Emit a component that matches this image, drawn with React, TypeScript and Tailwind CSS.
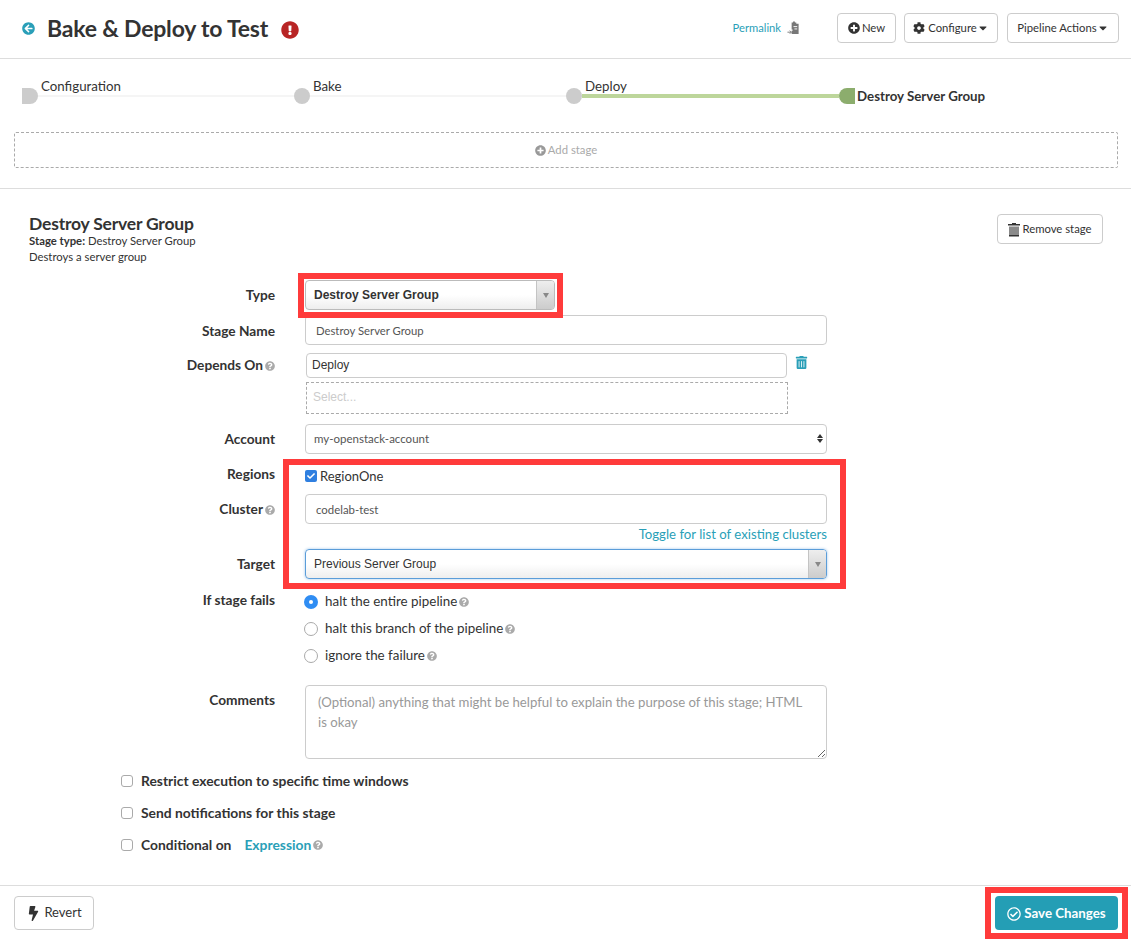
import { FaArrowCircleLeft, FaBolt, FaCaretDown, FaCheck, FaCog, FaExclamationCircle, FaPlusCircle, FaQuestionCircle, FaRegCheckCircle, FaTrashAlt } from 'react-icons/fa'
import type { ReactNode } from 'react'

const font = 'font-["Lato","Open_Sans",sans-serif]'

function Help() {
  return <FaQuestionCircle className="inline-block ml-[2px] text-[#aaaaaa] text-[10px] align-[-1px]" />
}

function Row({ label, help, children, className = '', labelClass = '' }: { label: string; help?: boolean; children: ReactNode; className?: string; labelClass?: string }) {
  return (
    <div className={`flex items-start ${className}`}>
      <div className={`w-[275px] shrink-0 text-right text-[13.7px] font-bold text-[#333333] leading-[18px] ${labelClass}`}>
        {label}
        {help && <Help />}
      </div>
      <div className="w-[522px] ml-[30px]">{children}</div>
    </div>
  )
}

// chosen-style select with the gradient and grey arrow box
function ChosenSelect({ value, bold, focus, className }: { value: string; bold?: boolean; focus?: boolean; className: string }) {
  return (
    <div className={`flex items-stretch h-[30px] rounded-[4px] border overflow-hidden font-["Liberation_Sans",sans-serif] bg-gradient-to-b from-white via-white to-[#eeeeee] ${focus ? 'border-[#5b9dd9] shadow-[0_0_3px_#9ec5ea]' : 'border-[#bbbbbb]'} ${className}`}>
      <span className={`flex-1 pl-2 flex items-center text-[12px] text-[#333333] ${bold ? 'font-bold' : ''}`}>{value}</span>
      <span className="w-[18px] border-l border-[#c4c4c4] bg-gradient-to-b from-[#eeeeee] to-[#cccccc] flex items-center justify-center">
        <span className="w-0 h-0 border-x-[3px] border-x-transparent border-t-[5px] border-t-[#888888]" />
      </span>
    </div>
  )
}

function Radio({ on, children }: { on?: boolean; children: ReactNode }) {
  return (
    <div className="flex items-center h-[27px] -ml-[1px] text-[13.4px] text-[#333333]">
      {on ? (
        <span className="w-[14px] h-[14px] rounded-full bg-[#2f8df3] flex items-center justify-center">
          <span className="w-[4px] h-[4px] rounded-full bg-white" />
        </span>
      ) : (
        <span className="w-[14px] h-[14px] rounded-full border border-[#aaaaaa] bg-white" />
      )}
      <span className="ml-[7px]">{children}</span>
      <Help />
    </div>
  )
}

function Check({ children }: { children: ReactNode }) {
  return (
    <div className="flex items-center h-[32px] pl-[121px] text-[13.85px] font-bold text-[#333333]">
      <span className="w-[12px] h-[12px] rounded-[3px] border border-[#aaaaaa] bg-white mr-2" />
      {children}
    </div>
  )
}

function Node({ shape, label }: { shape: string; label: string }) {
  return (
    <div className="relative flex items-center w-[272px] shrink-0">
      <span className={`w-[16px] h-[16px] bg-[#cccccc] shrink-0 ${shape}`} />
      <span className="flex-1 bg-[#f5f5f5] h-[2px]" />
      <span className="absolute left-[19px] top-[-11px] text-[13.3px] text-[#333333] leading-[18px]">{label}</span>
    </div>
  )
}

export default function App() {
  return (
    <div className={`relative w-[1131px] h-[944px] bg-white overflow-hidden ${font}`}>
      {/* Header */}
      <header className="h-[59px] border-b border-[#dddddd] flex items-center pl-[22px] pr-[12px] pb-[2px]">
        <FaArrowCircleLeft className="text-[#2a9fb8] text-[13px]" />
        <h1 className="ml-[12px] mt-[1px] text-[23px] font-bold text-[#333333] tracking-[-0.2px]">Bake &amp; Deploy to Test</h1>
        <FaExclamationCircle className="ml-[13px] mt-[3px] text-[#b82525] text-[18px]" />
        <a className="ml-auto text-[11.2px] text-[#2a9fb8]">Permalink</a>
        <svg viewBox="0 0 14 15" className="ml-[6px] w-[13px] h-[14px]">
          <path d="M5 3V1.500h1.500V0.500h2v1H10V3h2.500v11H5v-3.500h1V9H5V3z" fill="#777777" />
          <path d="M7 6h4M8 8.500h3" stroke="#ffffff" strokeWidth="1" />
          <path d="M0.500 12h4M3 10.300L4.700 12 3 13.700" stroke="#777777" strokeWidth="1" fill="none" />
        </svg>
        <button className="ml-[37px] h-[30px] w-[59px] border border-[#cccccc] rounded-[4px] text-[11.3px] text-[#333333] flex items-center justify-center">
          <FaPlusCircle className="text-[12px] mr-[2px]" />New
        </button>
        <button className="ml-[8px] h-[30px] w-[94px] border border-[#cccccc] rounded-[4px] text-[11.3px] text-[#333333] flex items-center justify-center">
          <FaCog className="text-[12px] mr-[3px]" />Configure<FaCaretDown className="text-[12px]" />
        </button>
        <button className="ml-[9px] h-[30px] w-[112px] border border-[#cccccc] rounded-[4px] text-[11.3px] text-[#333333] flex items-center justify-center">
          Pipeline Actions<FaCaretDown className="text-[12px]" />
        </button>
      </header>

      {/* Pipeline graph */}
      <section className="h-[130px] border-b border-[#dddddd] pl-[14px] pr-[13px] pt-[29px]">
        <div className="flex items-center h-[16px] pl-[8px]">
          <Node shape="rounded-r-full" label="Configuration" />
          <Node shape="rounded-full" label="Bake" />
          <div className="relative flex items-center w-[273px] shrink-0">
            <span className="w-[16px] h-[16px] rounded-full bg-[#cccccc] shrink-0" />
            <span className="flex-1 bg-[#bdd69b] h-[4px]" />
            <span className="absolute left-[19px] top-[-11px] text-[13.3px] text-[#333333] leading-[18px]">Deploy</span>
          </div>
          <span className="w-[16px] h-[16px] bg-[#8cad6d] rounded-l-full shrink-0" />
          <span className="ml-[2px] mt-[1px] text-[13.3px] font-bold text-[#333333]">Destroy Server Group</span>
        </div>
        <div className="mt-[28px] h-[36px] border border-dashed border-[#aaaaaa] rounded-[2px] flex items-center justify-center text-[11.3px] text-[#aaaaaa]">
          <FaPlusCircle className="text-[11px] mr-[2px] text-[#999999]" />Add stage
        </div>
      </section>

      {/* Stage details */}
      <section className="h-[696px] pt-[25px]">
        <div className="flex justify-between pl-[29px] pr-[28px]">
          <div>
            <h2 className="text-[17.5px] font-bold text-[#333333] leading-[19px] tracking-[-0.2px]">Destroy Server Group</h2>
            <p className="text-[11.3px] text-[#333333] leading-[16px]"><b>Stage type:</b> Destroy Server Group</p>
            <p className="text-[11.3px] text-[#333333] leading-[16px]">Destroys a server group</p>
          </div>
          <button className="h-[30px] w-[106px] border border-[#cccccc] rounded-[4px] text-[11.3px] text-[#333333] flex items-center justify-center">
            <svg viewBox="0 0 12 15" className="w-[12px] h-[15px] mr-[2px]">
              <path d="M4 2V1h4v1h4v1.500H0V2h4z" fill="#333333" />
              <path d="M1 4.500h10V13H1z" fill="#8a8a8a" />
              <path d="M1 13h10v1.500H1z" fill="#333333" />
            </svg>
            Remove stage
          </button>
        </div>

        <div className="mt-[15px]">
          <Row label="Type" className="h-[35px]" labelClass="pt-[6px]">
            <ChosenSelect value="Destroy Server Group" bold className="w-[250px]" />
          </Row>
          <Row label="Stage Name" className="h-[38px]" labelClass="pt-[7px]">
            <input readOnly value="Destroy Server Group" className="w-full h-[30px] border border-[#cccccc] rounded-[4px] px-[10px] text-[11.3px] text-[#555555]" />
          </Row>
          <Row label="Depends On" help className="h-[71px]" labelClass="pt-[3px]">
            <div className="relative pl-px">
              <div className='w-[481px] h-[25px] border border-[#cccccc] rounded-[4px] pl-[5px] pb-[2px] flex items-center text-[12px] text-[#333333] font-["Liberation_Sans",sans-serif]'>Deploy</div>
              <FaTrashAlt className="absolute left-[490px] top-[3px] text-[#2a9fb8] text-[13px]" />
              <div className='mt-[4px] w-[482px] h-[32px] border border-dashed border-[#aaaaaa] pl-[6px] pb-[2px] flex items-center text-[12px] text-[#cccccc] font-["Liberation_Sans",sans-serif]'>Select...</div>
            </div>
          </Row>
          <Row label="Account" className="h-[38px]" labelClass="pt-[6px]">
            <div className="relative w-full h-[30px] border border-[#cccccc] rounded-[4px] pl-[8px] flex items-center text-[11.5px] text-[#555555]">
              my-openstack-account
              <span className="absolute right-[3px] top-[9px] flex flex-col gap-[1px]">
                <span className="w-0 h-0 border-x-[3px] border-x-transparent border-b-[4px] border-b-[#333333]" />
                <span className="w-0 h-0 border-x-[3px] border-x-transparent border-t-[4px] border-t-[#333333]" />
              </span>
            </div>
          </Row>
          <Row label="Regions" className="h-[32px]" labelClass="pt-[3px]">
            <div className="flex items-center text-[13px] leading-[18px] mt-[5px] text-[#333333]">
              <span className="w-[12px] h-[12px] rounded-[2px] bg-[#2f7fe0] flex items-center justify-center mr-[3px]">
                <FaCheck className="text-white text-[8px]" />
              </span>
              RegionOne
            </div>
          </Row>
          <Row label="Cluster" help className="h-[55px]" labelClass="pt-[6px]">
            <input readOnly value="codelab-test" className="w-full h-[30px] border border-[#cccccc] rounded-[4px] px-[10px] text-[11.4px] text-[#555555]" />
            <div className="text-right text-[13.2px] text-[#2a9fb8] leading-[18px] mt-[1px]">Toggle for list of existing clusters</div>
          </Row>
          <Row label="Target" className="h-[42px]" labelClass="pt-[6px]">
            <ChosenSelect value="Previous Server Group" focus className="w-full" />
          </Row>
          <Row label="If stage fails" className="h-[94px]">
            <div className="-mt-[3px]">
              <Radio on>halt the entire pipeline</Radio>
              <Radio>halt this branch of the pipeline</Radio>
              <Radio>ignore the failure</Radio>
            </div>
          </Row>
          <Row label="Comments" className="h-[80px]" labelClass="pt-[6px]">
            <textarea
              readOnly
              placeholder="(Optional) anything that might be helpful to explain the purpose of this stage; HTML is okay"
              className="w-full h-[74px] block border border-[#cccccc] rounded-[4px] px-[12px] py-[6px] text-[13.2px] leading-[20px] placeholder:text-[#999999] outline-none"
            />
          </Row>
          <Check>Restrict execution to specific time windows</Check>
          <Check>Send notifications for this stage</Check>
          <Check>
            Conditional on
            <span className="ml-[13px] text-[#2a9fb8]">Expression</span>
            <Help />
          </Check>
        </div>
      </section>

      {/* Footer */}
      <footer className="border-t border-[#dddddd] h-[59px] pl-[14px] pr-[13px] pt-[10px] flex justify-between">
        <button className="h-[34px] w-[80px] border border-[#cccccc] rounded-[4px] text-[13px] text-[#333333] flex items-center justify-center">
          <FaBolt className="text-[15px] mr-[3px]" />Revert
        </button>
        <button className="h-[34px] w-[123px] bg-[#249eb5] rounded-[4px] text-[13.3px] font-bold text-white flex items-center justify-center pt-px">
          <FaRegCheckCircle className="text-[14px] mr-[3px]" />Save Changes
        </button>
      </footer>

      {/* Red annotation boxes */}
      <div className="absolute left-[298px] top-[273px] w-[265px] h-[45px] border-[6px] border-[#ff3b3b] pointer-events-none" />
      <div className="absolute left-[283px] top-[459px] w-[563px] h-[130px] border-[6px] border-[#ff3b3b] pointer-events-none" />
      <div className="absolute left-[985px] top-[887px] w-[143px] h-[52px] border-[6px] border-[#ff3b3b] pointer-events-none" />
    </div>
  )
}
